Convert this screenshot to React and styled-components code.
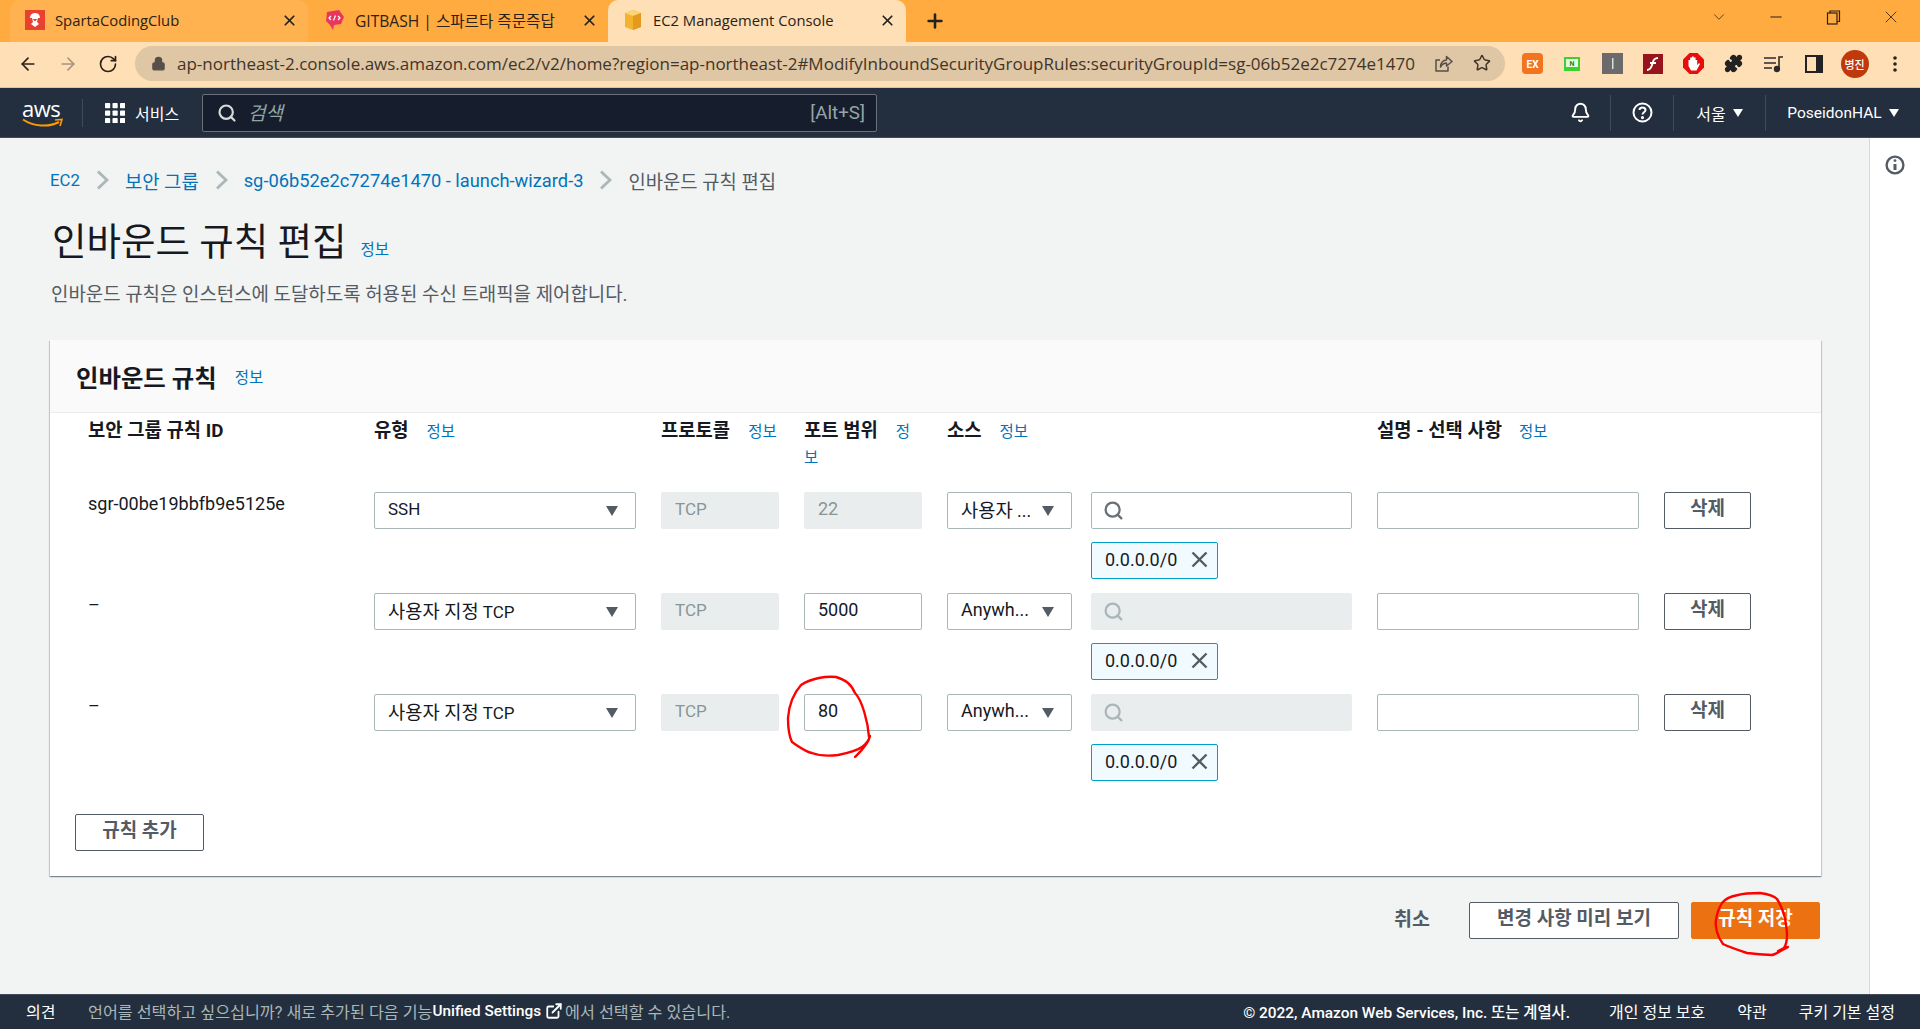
import React from 'react'
import styled, { createGlobalStyle } from 'styled-components'
import { ArrowLeft, ArrowRight, RotateCw, Lock, Star, Puzzle, Plus, X, Search, Bell, ChevronDown, Minus, ExternalLink } from 'lucide-react'

const GlobalStyle = createGlobalStyle`
html, body {
    margin: 0;
    padding: 0;
    height: 1029px;
    overflow: hidden;
    background: #f2f3f3;
    font-family: Roboto, 'Noto Sans CJK KR', sans-serif;
    color: #16191f;
}
* {
    box-sizing: border-box;
}
`

const Page = styled.div`
width: 1920px;
height: 1029px;
display: flex;
flex-direction: column;
`

/* browser chrome */
const TabStrip = styled.div`
height: 42px;
flex: none;
background: #ffab40;
display: flex;
padding-left: 10px;
font-family: 'Open Sans', 'Noto Sans CJK KR', sans-serif;
`
const Tab = styled.div`
width: ${p => p.$w}px;
height: 42px;
display: flex;
align-items: center;
padding: 0 10px 2px ${p => p.$pad}px;
border-radius: 10px 10px 0 0;
background: ${p => p.$active ? '#ffdfb5' : p.$hover ? '#ffb24f' : 'transparent'};
color: #2b2118;
`
const TabTitle = styled.span`
flex: 1;
margin-left: 10px;
font-size: ${p => p.$size || 14.8}px;
white-space: nowrap;
overflow: hidden;
`
const NewTab = styled.div`
width: 58px;
display: flex;
align-items: center;
justify-content: center;
`
const WindowButtons = styled.div`
margin-left: auto;
display: flex;
`
const WindowButton = styled.div`
width: 57.5px;
height: 34px;
display: flex;
align-items: center;
justify-content: center;
color: #2b2118;
`
const Toolbar = styled.div`
height: 46px;
flex: none;
background: #ffdfb5;
border-bottom: 1px solid #d8c4a6;
display: flex;
align-items: center;
padding: 0 0 2px 18px;
`
const NavIcons = styled.div`
display: flex;
gap: 20px;
width: 117px;
flex: none;
`
const AddressPill = styled.div`
width: 1370px;
height: 35px;
flex: none;
border-radius: 18px;
background: #dfc6a4;
display: flex;
align-items: center;
padding: 0 14px 0 16px;
font-family: 'Open Sans', sans-serif;
font-size: 17px;
color: #3f3529;
`
const UrlText = styled.span`
flex: 1;
margin-left: 11px;
white-space: nowrap;
overflow: hidden;
`
const PillIcons = styled.div`
display: flex;
gap: 20px;
margin-left: 16px;
`
const Extensions = styled.div`
display: flex;
align-items: center;
margin-left: 7px;
`
const ExtSlot = styled.div`
width: 40.3px;
height: 36px;
display: flex;
align-items: center;
justify-content: center;
`
const Avatar = styled.div`
width: 28px;
height: 28px;
border-radius: 50%;
background: #c0390c;
color: #fff;
font-size: 11px;
font-weight: 500;
display: flex;
align-items: center;
justify-content: center;
`

/* aws top nav */
const TopNav = styled.div`
height: 50px;
flex: none;
background: #232f3e;
border-bottom: 1px solid #414a56;
display: flex;
align-items: center;
color: #fff;
`
const LogoBox = styled.div`
width: 83px;
height: 28px;
padding-left: 22px;
border-right: 1px solid #414a56;
`
const LogoText = styled.span`
display: block;
font-family: 'Open Sans', sans-serif;
font-size: 22px;
line-height: 19px;
letter-spacing: -0.5px;
`
const ServicesButton = styled.div`
display: flex;
align-items: center;
margin-left: 22px;
gap: 10px;
font-size: 16px;
width: 97px;
`
const SearchBox = styled.div`
width: 675px;
height: 38px;
background: #161e2d;
border: 1px solid #687078;
border-radius: 2px;
display: flex;
align-items: center;
padding: 0 11px 0 14px;
`
const SearchHint = styled.span`
flex: 1;
margin-left: 11px;
padding-bottom: 2px;
font-size: 19px;
font-style: italic;
color: #95a5a6;
`
const Shortcut = styled.span`
font-size: 18.8px;
color: #95a5a6;
`
const NavRight = styled.div`
margin-left: auto;
display: flex;
align-items: center;
height: 100%;
`
const NavItem = styled.div`
width: ${p => p.$w}px;
height: 36px;
display: flex;
align-items: center;
justify-content: center;
gap: 7px;
font-size: ${p => p.$size || 16}px;
border-left: ${p => p.$line ? '1px solid #414a56' : 'none'};
`
const SmallCaret = styled.span`
width: 0;
height: 0;
border-left: 5px solid transparent;
border-right: 5px solid transparent;
border-top: 8px solid #fff;
`

/* main area */
const Main = styled.div`
flex: 1;
display: flex;
min-height: 0;
position: relative;
`
const Content = styled.div`
flex: 1;
padding: 30px 48px 0 50px;
`
const SidePanel = styled.div`
width: 51px;
background: #fff;
border-left: 1px solid #d5dbdb;
display: flex;
justify-content: center;
padding-top: 17px;
`
const Breadcrumbs = styled.div`
display: flex;
align-items: center;
height: 24px;
color: #545b64;
font-size: 18.8px;
`
const Crumb = styled.span`
color: #0073bb;
font-size: ${p => p.$size || 18.8}px;
`
const Title = styled.h1`
margin: 27px 0 0 2px;
display: flex;
align-items: baseline;
font-size: 37.5px;
line-height: 46px;
font-weight: 400;
`
const InfoLink = styled.a`
color: #0073bb;
font-size: 15.5px;
font-weight: 400;
margin-left: ${p => p.$ml || 18}px;
word-break: break-all;
`
const Description = styled.p`
margin: 10px 0 0 1px;
font-size: 18.9px;
line-height: 24px;
color: #545b64;
`
const Card = styled.section`
margin-top: 33px;
height: 536px;
background: #fff;
box-shadow: 0 1px 1px 0 rgba(0, 28, 36, 0.3), 1px 1px 1px 0 rgba(0, 28, 36, 0.15), -1px 1px 1px 0 rgba(0, 28, 36, 0.15);
`
const CardHeader = styled.div`
height: 73px;
background: #fafafa;
border-bottom: 1px solid #eaeded;
padding: 0 26px;
display: flex;
align-items: center;
`
const CardTitle = styled.h2`
margin: 0;
font-size: 24.4px;
font-weight: 700;
`
const RuleGrid = styled.div`
display: grid;
grid-template-columns: 286px 287px 143px 143px 144px 286px 287px 87px;
grid-template-rows: 79px repeat(3, 101px);
padding-left: 38px;
`
const Head = styled.div`
grid-column: ${p => p.$span || 'auto'};
width: ${p => p.$w ? p.$w + 'px' : 'auto'};
padding-top: 6px;
font-size: 18.8px;
line-height: 25px;
font-weight: 700;
`
const Cell = styled.div`
display: flex;
flex-direction: column;
align-items: flex-start;
gap: 13px;
`
const RuleId = styled.span`
font-size: 18px;
line-height: 24px;
`
const Field = styled.div`
width: ${p => p.$w}px;
height: 37px;
flex: none;
border: 1px solid ${p => p.$off ? '#eaeded' : '#aab7b8'};
border-radius: 2px;
background: ${p => p.$off ? '#eaeded' : '#fff'};
color: ${p => p.$off ? '#879596' : '#16191f'};
display: flex;
align-items: center;
padding: 0 17px 4px 13px;
font-size: ${p => p.$size || 17}px;
white-space: nowrap;
`
const FieldText = styled.span`
flex: 1;
overflow: hidden;
`
const KoText = styled.span`
font-size: 18.7px;
`
const Caret = styled.span`
flex: none;
width: 0;
height: 0;
margin-top: 4px;
border-left: 6.5px solid transparent;
border-right: 6.5px solid transparent;
border-top: 10.5px solid #545b64;
`
const Tag = styled.div`
height: 37px;
width: 127px;
display: flex;
align-items: center;
justify-content: space-between;
padding: 0 9px 2px 13px;
border: 1px solid #00a1c9;
border-radius: 2px;
background: #f1faff;
font-size: 18px;
`
const OutlineButton = styled.button`
width: ${p => p.$w}px;
height: 37px;
background: #fff;
border: 1px solid #545b64;
border-radius: 2px;
color: #545b64;
font-family: inherit;
font-size: 19px;
font-weight: 700;
padding: 0 0 8px;
`
const AddRow = styled.div`
padding: 0 0 0 25px;
margin-top: 19px;
`
const Actions = styled.div`
margin-top: 26px;
display: flex;
align-items: center;
justify-content: flex-end;
padding-right: 1px;
`
const CancelLink = styled.span`
font-size: 19.5px;
font-weight: 700;
color: #545b64;
margin-right: 39px;
padding-bottom: 6px;
`
const SaveButton = styled.button`
width: 129px;
height: 37px;
margin-left: 12px;
background: #ec7211;
border: 1px solid #ec7211;
border-radius: 2px;
color: #fff;
font-family: inherit;
font-size: 19px;
font-weight: 700;
padding: 0 0 8px;
`
const Scribbles = styled.svg`
position: absolute;
left: 0;
top: -138px;
width: 1920px;
height: 1029px;
pointer-events: none;
fill: none;
stroke: #f00;
stroke-width: 2.4;
stroke-linecap: round;
stroke-linejoin: round;
`

/* footer */
const Footer = styled.footer`
height: 35px;
flex: none;
background: #232f3e;
border-top: 1px solid #414a56;
display: flex;
align-items: center;
padding: 0 25px 3px 26px;
font-size: 16px;
color: #d5dbdb;
white-space: nowrap;
`
const Feedback = styled.span`
color: #fff;
width: 62px;
`
const LangNote = styled.span`
display: flex;
align-items: center;
font-size: 16.2px;
color: #aab7b8;
`
const LangStrong = styled.span`
color: #fff;
font-size: 15.3px;
font-weight: 500;
`
const FooterRight = styled.div`
margin-left: auto;
display: flex;
align-items: center;
gap: 32px;
color: #fff;
`
const Copyright = styled.span`
font-size: 15.4px;
font-weight: 500;
margin-right: 7px;
`

function AwsLogo() {
    return (
        <>
            <LogoText>aws</LogoText>
            <svg width="42" height="11" viewBox="0 0 42 11" style={{ display: 'block' }}>
                <path d="M1 1.5 C 11 8.5, 27 9.5, 37 4" fill="none" stroke="#ff9900" strokeWidth="2" />
                <path d="M33 2 L40 1.5 L38 8" fill="none" stroke="#ff9900" strokeWidth="1.6" />
            </svg>
        </>
    )
}

function SpartaIcon() {
    return (
        <svg width="20" height="20" viewBox="0 0 20 20">
            <rect width="20" height="20" fill="#e8412f" />
            <path d="M10 3 C6 3 5 6 5 8 L7 8 L8 12 L6 14 L10 17 L14 14 L12 12 L13 8 L15 8 C15 6 14 3 10 3 Z" fill="#fff" />
            <path d="M7.5 9 L12.5 9 L10.5 11 L9.5 11 Z" fill="#e8412f" />
        </svg>
    )
}

function GitbashIcon() {
    return (
        <svg width="21" height="22" viewBox="0 0 21 22">
            <path d="M3 3 L15 1 L20 8 L17 15 L10 16 L9 21 L6 16 L2 12 Z" fill="#e8365d" />
            <path d="M7 7 L5 9 L7 11 M14 7 L16 9 L14 11 M11.5 6.5 L9.5 11.5" fill="none" stroke="#fff" strokeWidth="1.2" />
        </svg>
    )
}

function BoxIcon() {
    return (
        <svg width="20" height="22" viewBox="0 0 20 22">
            <path d="M2 4 L10 1 L18 4 L18 18 L10 21 L2 18 Z" fill="#f4b32f" />
            <path d="M2 4 L10 7 L18 4 L10 1 Z" fill="#fbd575" />
            <path d="M10 7 L10 21 L18 18 L18 4 Z" fill="#e49a1c" />
        </svg>
    )
}

function ShareIcon() {
    return (
        <svg width="19" height="19" viewBox="0 0 19 19" fill="none" stroke="#574f48" strokeWidth="1.5" strokeLinejoin="round">
            <path d="M6 6 H2 V17 H14 V12.5" />
            <path d="M6.5 13 C6.5 8.5 9.5 6 12.5 6 V2.5 L18 7.5 L12.5 12 V9 C10 9 8 10.5 6.5 13 Z" />
        </svg>
    )
}

function CrumbSep() {
    return (
        <svg width="13" height="20" viewBox="0 0 13 20" style={{ margin: '0 16px' }}>
            <path d="M2 1.5 L11 10 L2 18.5" fill="none" stroke="#aab7b8" strokeWidth="2.8" />
        </svg>
    )
}

function ServiceGrid() {
    const cells = []
    for (let y = 0; y < 3; y++) {
        for (let x = 0; x < 3; x++) {
            cells.push(<rect key={x + '-' + y} x={x * 7.5} y={y * 7.5} width="5.2" height="5.2" rx="0.8" fill="#fff" />)
        }
    }
    return <svg width="20" height="20" viewBox="0 0 20 20">{cells}</svg>
}

function RemoveTag() {
    return (
        <Tag>
            0.0.0.0/0
            <svg width="17" height="17" viewBox="0 0 17 17">
                <path d="M1.5 1.5 L15.5 15.5 M15.5 1.5 L1.5 15.5" fill="none" stroke="#545b64" strokeWidth="2.4" />
            </svg>
        </Tag>
    )
}

const rules = [
    { id: 'sgr-00be19bbfb9e5125e', type: 'SSH', port: '22', portOff: true, source: <><KoText>사용자</KoText> ...</>, searchOff: false },
    { id: '–', type: <><KoText>사용자 지정</KoText> TCP</>, port: '5000', portOff: false, source: 'Anywh...', searchOff: true },
    { id: '–', type: <><KoText>사용자 지정</KoText> TCP</>, port: '80', portOff: false, source: 'Anywh...', searchOff: true },
]

export default function App() {
    return (
        <Page>
            <GlobalStyle />
            <TabStrip>
                <Tab $w={298} $pad={15} $hover>
                    <SpartaIcon />
                    <TabTitle>SpartaCodingClub</TabTitle>
                    <X size={17} color="#222" strokeWidth={2.4} />
                </Tab>
                <Tab $w={300} $pad={16}>
                    <GitbashIcon />
                    <TabTitle $size={15.6}>GITBASH | 스파르타 즉문즉답</TabTitle>
                    <X size={17} color="#222" strokeWidth={2.4} />
                </Tab>
                <Tab $w={298} $pad={15} $active>
                    <BoxIcon />
                    <TabTitle>EC2 Management Console</TabTitle>
                    <X size={17} color="#222" strokeWidth={2.4} />
                </Tab>
                <NewTab><Plus size={22} color="#222" strokeWidth={2.8} /></NewTab>
                <WindowButtons>
                    <WindowButton><ChevronDown size={18} strokeWidth={1} /></WindowButton>
                    <WindowButton><Minus size={18} strokeWidth={1.4} /></WindowButton>
                    <WindowButton>
                        <svg width="15" height="15" viewBox="0 0 15 15" fill="none" stroke="#2b2118" strokeWidth="1.2">
                            <rect x="1.5" y="3" width="9.5" height="11" />
                            <path d="M4 3 V1 H13.5 V11.5 H11" />
                        </svg>
                    </WindowButton>
                    <WindowButton><X size={20} strokeWidth={1} /></WindowButton>
                </WindowButtons>
            </TabStrip>

            <Toolbar>
                <NavIcons>
                    <ArrowLeft size={20} color="#2b2118" strokeWidth={2} />
                    <ArrowRight size={20} color="#a8957c" strokeWidth={2} />
                    <RotateCw size={20} color="#2b2118" strokeWidth={2} />
                </NavIcons>
                <AddressPill>
                    <Lock size={15} color="#574f48" fill="#574f48" />
                    <UrlText>ap-northeast-2.console.aws.amazon.com/ec2/v2/home?region=ap-northeast-2#ModifyInboundSecurityGroupRules:securityGroupId=sg-06b52e2c7274e1470</UrlText>
                    <PillIcons>
                        <ShareIcon />
                        <Star size={18} color="#3f3529" />
                    </PillIcons>
                </AddressPill>
                <Extensions>
                    <ExtSlot>
                        <svg width="21" height="21" viewBox="0 0 21 21">
                            <rect width="21" height="21" rx="4" fill="#f3741f" />
                            <text x="10.5" y="14.5" fontSize="10" fontWeight="700" fill="#fff" textAnchor="middle" fontFamily="Roboto">EX</text>
                        </svg>
                    </ExtSlot>
                    <ExtSlot>
                        <svg width="16" height="14" viewBox="0 0 16 14">
                            <rect width="16" height="14" fill="#3fd02f" />
                            <rect x="2" y="2" width="12" height="8" fill="#e6fbe1" />
                            <text x="8" y="9" fontSize="7" fontWeight="700" fill="#1a8f10" textAnchor="middle" fontFamily="Roboto">N</text>
                        </svg>
                    </ExtSlot>
                    <ExtSlot>
                        <svg width="21" height="21" viewBox="0 0 21 21">
                            <rect width="21" height="21" fill="#6b6b6b" />
                            <rect x="10" y="5" width="1.5" height="11" fill="#d8dde3" />
                        </svg>
                    </ExtSlot>
                    <ExtSlot>
                        <svg width="20" height="20" viewBox="0 0 20 20">
                            <rect width="20" height="20" fill="#98141c" />
                            <path d="M15 4 C10 4 10 8 9 11 C8 14 7 16 4 16" fill="none" stroke="#fff" strokeWidth="2" />
                            <path d="M7 9 H13" stroke="#fff" strokeWidth="2" />
                        </svg>
                    </ExtSlot>
                    <ExtSlot>
                        <svg width="21" height="21" viewBox="0 0 21 21">
                            <polygon points="6.5,0 14.5,0 21,6.5 21,14.5 14.5,21 6.5,21 0,14.5 0,6.5" fill="#e60d0d" />
                            <path d="M5.5 13 V7 H7.2 V11 V4.5 H9 V10 V3.5 H10.8 V10 V4.5 H12.6 V11 V7 H14.2 V12 L16 10 L17 11 L13.5 17.5 H8 Z" fill="#fff" />
                        </svg>
                    </ExtSlot>
                    <ExtSlot>
                        <Puzzle size={19} color="#222" fill="#222" />
                    </ExtSlot>
                    <ExtSlot>
                        <svg width="20" height="18" viewBox="0 0 20 18" fill="none" stroke="#2b2b2b" strokeWidth="1.6">
                            <path d="M0 3 H12 M0 8 H12 M0 13 H8 M15 13 V2 H19" />
                            <circle cx="13" cy="14" r="2.4" fill="#2b2b2b" />
                        </svg>
                    </ExtSlot>
                    <ExtSlot>
                        <svg width="18" height="18" viewBox="0 0 18 18">
                            <rect x="1" y="1" width="16" height="16" fill="none" stroke="#222" strokeWidth="2" />
                            <rect x="11" y="1" width="6" height="16" fill="#222" />
                        </svg>
                    </ExtSlot>
                    <ExtSlot><Avatar>병진</Avatar></ExtSlot>
                    <ExtSlot>
                        <svg width="4" height="18" viewBox="0 0 4 18" fill="#2b2118">
                            <circle cx="2" cy="3" r="1.8" />
                            <circle cx="2" cy="9" r="1.8" />
                            <circle cx="2" cy="15" r="1.8" />
                        </svg>
                    </ExtSlot>
                </Extensions>
            </Toolbar>

            <TopNav>
                <LogoBox><AwsLogo /></LogoBox>
                <ServicesButton><ServiceGrid />서비스</ServicesButton>
                <SearchBox>
                    <Search size={20} color="#d5dbdb" strokeWidth={2.6} />
                    <SearchHint>검색</SearchHint>
                    <Shortcut>[Alt+S]</Shortcut>
                </SearchBox>
                <NavRight>
                    <NavItem $w={60}><Bell size={21} color="#fff" strokeWidth={2.2} /></NavItem>
                    <NavItem $w={63} $line>
                        <svg width="21" height="21" viewBox="0 0 21 21" fill="none" stroke="#fff" strokeWidth="2">
                            <circle cx="10.5" cy="10.5" r="9" />
                            <path d="M7.5 8 C7.5 4.5 13.5 4.5 13.5 8 C13.5 10.2 10.5 10.2 10.5 12.6" />
                            <circle cx="10.5" cy="15.6" r="0.6" fill="#fff" />
                        </svg>
                    </NavItem>
                    <NavItem $w={92} $line>서울<SmallCaret /></NavItem>
                    <NavItem $w={155} $line $size={15.5}>PoseidonHAL<SmallCaret /></NavItem>
                </NavRight>
            </TopNav>

            <Main>
                <Content>
                    <Breadcrumbs>
                        <Crumb $size={16.8}>EC2</Crumb>
                        <CrumbSep />
                        <Crumb>보안 그룹</Crumb>
                        <CrumbSep />
                        <Crumb $size={18.3}>sg-06b52e2c7274e1470 - launch-wizard-3</Crumb>
                        <CrumbSep />
                        인바운드 규칙 편집
                    </Breadcrumbs>
                    <Title>인바운드 규칙 편집<InfoLink $ml={14}>정보</InfoLink></Title>
                    <Description>인바운드 규칙은 인스턴스에 도달하도록 허용된 수신 트래픽을 제어합니다.</Description>

                    <Card>
                        <CardHeader>
                            <CardTitle>인바운드 규칙</CardTitle>
                            <InfoLink>정보</InfoLink>
                        </CardHeader>
                        <RuleGrid>
                            <Head>보안 그룹 규칙 ID</Head>
                            <Head>유형<InfoLink>정보</InfoLink></Head>
                            <Head>프로토콜<InfoLink>정보</InfoLink></Head>
                            <Head $w={118}>포트 범위<InfoLink>정보</InfoLink></Head>
                            <Head $span="span 2">소스<InfoLink>정보</InfoLink></Head>
                            <Head $span="span 2">설명 - 선택 사항<InfoLink $ml={17}>정보</InfoLink></Head>
                            {rules.map((rule, i) => (
                                <React.Fragment key={i}>
                                    <Cell><RuleId>{rule.id}</RuleId></Cell>
                                    <Cell>
                                        <Field $w={262}><FieldText>{rule.type}</FieldText><Caret /></Field>
                                    </Cell>
                                    <Cell><Field $w={118} $off>TCP</Field></Cell>
                                    <Cell><Field $w={118} $off={rule.portOff} $size={18}>{rule.port}</Field></Cell>
                                    <Cell>
                                        <Field $w={125} $size={18}><FieldText>{rule.source}</FieldText><Caret /></Field>
                                    </Cell>
                                    <Cell>
                                        <Field $w={261} $off={rule.searchOff}>
                                            <Search size={21} color={rule.searchOff ? '#aab7b8' : '#687078'} strokeWidth={2.6} style={{ margin: '4px 0 0 -2px' }} />
                                        </Field>
                                        <RemoveTag />
                                    </Cell>
                                    <Cell><Field $w={262} /></Cell>
                                    <Cell><OutlineButton $w={87}>삭제</OutlineButton></Cell>
                                </React.Fragment>
                            ))}
                        </RuleGrid>
                        <AddRow><OutlineButton $w={129}>규칙 추가</OutlineButton></AddRow>
                    </Card>

                    <Actions>
                        <CancelLink>취소</CancelLink>
                        <OutlineButton $w={210}>변경 사항 미리 보기</OutlineButton>
                        <SaveButton>규칙 저장</SaveButton>
                    </Actions>
                </Content>
                <SidePanel>
                    <svg width="20" height="20" viewBox="0 0 20 20" fill="none" stroke="#545b64" strokeWidth="2.4">
                        <circle cx="10" cy="10" r="8.4" />
                        <path d="M10 9 V15" strokeWidth="3" />
                        <circle cx="10" cy="5.6" r="1.4" fill="#545b64" stroke="none" />
                    </svg>
                </SidePanel>
                <Scribbles viewBox="0 0 1920 1029">
                    <path d="M869 737 C868 722 862 700 855 693 C851 684 846 680 836 677 C826 676 812 678 801 685 C793 694 789 705 788 718 C788 728 790 738 792 742 C798 746 806 752 812 753 C820 756 830 756 838 755 C848 753 858 750 862 747 C866 744 869 741 870 736 C868 745 860 752 855 757" />
                    <path d="M1716 920 C1717 912 1719 908 1722 903 C1726 898 1732 896 1738 895 C1745 893 1752 893 1760 893 C1767 894 1773 895 1777 899 C1781 905 1783 911 1785 918 C1786 925 1787 930 1787 935 C1787 941 1786 945 1784 948 C1780 952 1776 954 1772 955 C1764 955 1756 954 1747 953 C1738 950 1729 947 1723 944 C1720 940 1718 936 1717 932 C1716 928 1715 924 1716 920 M1788 947 L1773 955 M1786 947 L1778 951" />
                </Scribbles>
            </Main>

            <Footer>
                <Feedback>의견</Feedback>
                <LangNote>
                    언어를 선택하고 싶으십니까? 새로 추가된 다음 기능<LangStrong>Unified Settings</LangStrong>
                    <ExternalLink size={18} color="#fff" strokeWidth={2.4} style={{ margin: '0 2px 0 4px' }} />
                    에서 선택할 수 있습니다.
                </LangNote>
                <FooterRight>
                    <Copyright>© 2022, Amazon Web Services, Inc. 또는 계열사.</Copyright>
                    <span>개인 정보 보호</span>
                    <span>약관</span>
                    <span>쿠키 기본 설정</span>
                </FooterRight>
            </Footer>
        </Page>
    )
}
